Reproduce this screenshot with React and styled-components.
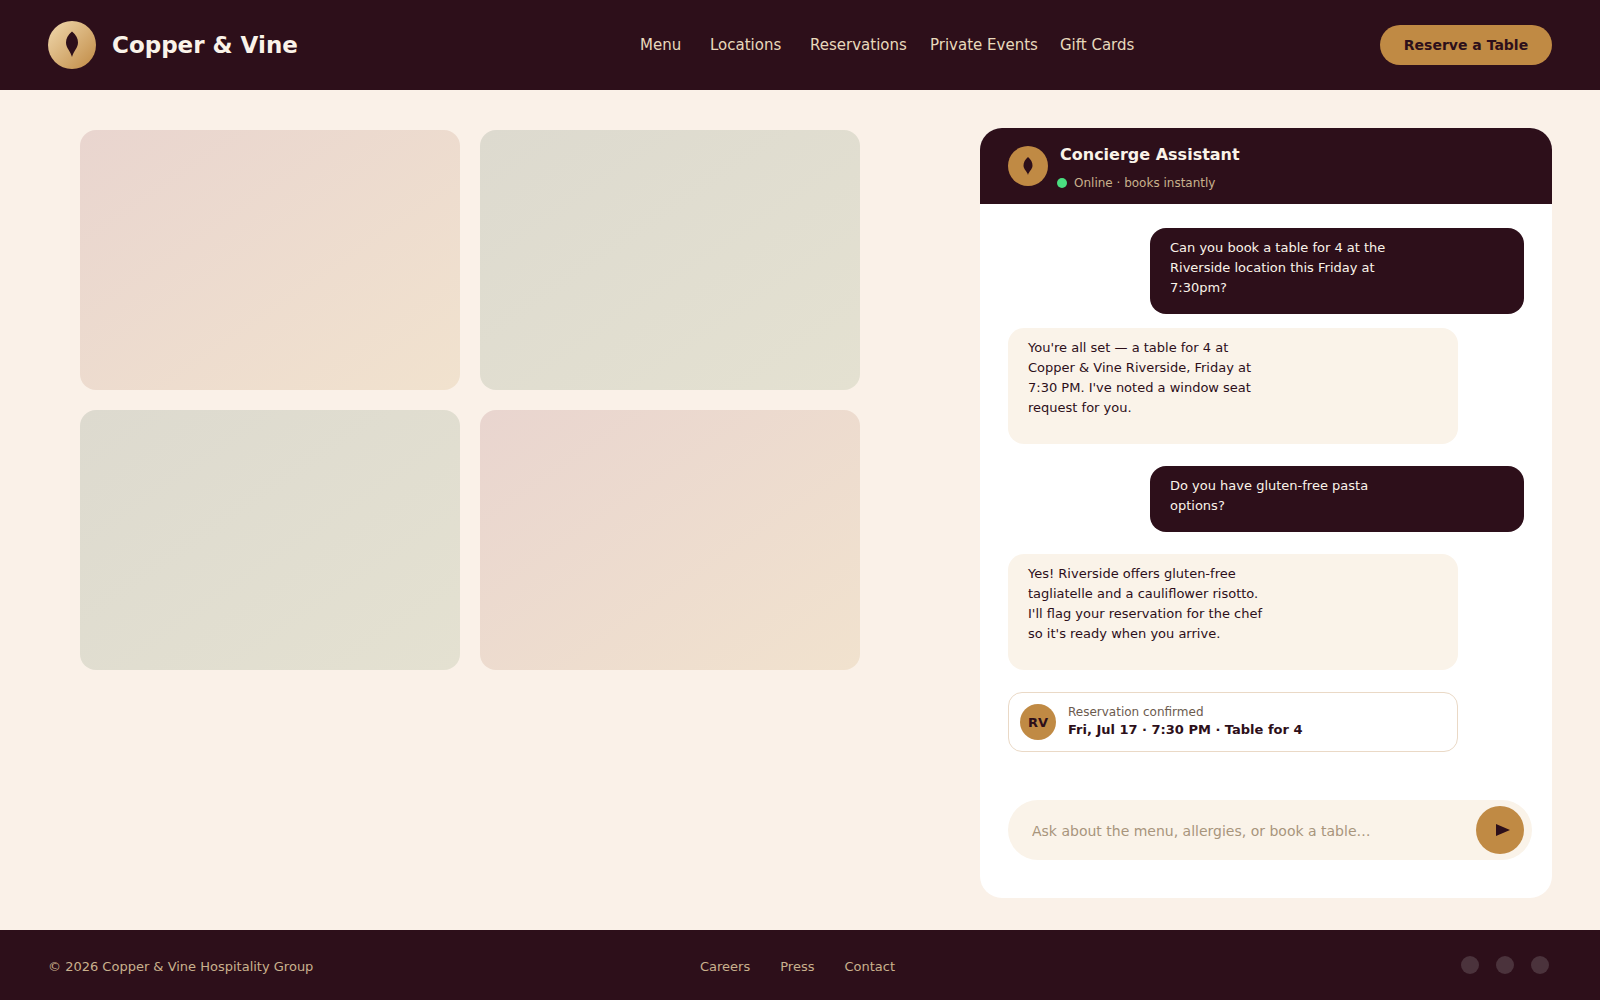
import React from "react";
import styled, { createGlobalStyle, css } from "styled-components";

const color = {
  plum: "#2d0f1a",
  copper: "#c08a44",
  cream: "#faf3e9",
  page: "#faf1e8",
  sand: "#e8d9bc",
  muted: "#c9b18d",
};

const GlobalStyle = createGlobalStyle`
  *, *::before, *::after { box-sizing: border-box; }
  body {
    margin: 0;
    font-family: "DejaVu Sans", Verdana, sans-serif;
    color: ${color.plum};
  }
  button, input { font-family: inherit; }
  h1, h2, p { margin: 0; }
  a { text-decoration: none; }
`;

const Page = styled.div`
  display: flex;
  flex-direction: column;
  min-height: 100vh;
  background: ${color.page};
`;

const Header = styled.header`
  display: grid;
  grid-template-columns: 37fr 57fr;
  align-items: center;
  height: 90px;
  padding: 0 48px;
  background: ${color.plum};
`;

const Brand = styled.a`
  display: flex;
  align-items: center;
  gap: 16px;
  color: ${color.cream};
  font-size: 23px;
  font-weight: 700;
`;

const HeaderActions = styled.div`
  display: flex;
  align-items: center;
  justify-content: space-between;
`;

const MainNav = styled.nav`
  display: grid;
  grid-template-columns: 70px 100px 120px 130px auto;
`;

const NavLink = styled.a`
  color: ${color.sand};
  font-size: 15px;
  line-height: 20px;
  white-space: nowrap;
`;

const ReserveButton = styled.button`
  height: 40px;
  width: 172px;
  padding: 0;
  border: 0;
  border-radius: 20px;
  background: ${color.copper};
  color: ${color.plum};
  font-size: 14px;
  font-weight: 700;
`;

const Main = styled.main`
  flex: 1;
  display: grid;
  grid-template-columns: 15fr 11fr;
  column-gap: 120px;
  padding: 38px 48px 32px 80px;
`;

const Gallery = styled.section`
  display: grid;
  grid-template-columns: 1fr 1fr;
  grid-auto-rows: 260px;
  align-content: start;
  gap: 20px;
  padding-top: 2px;
`;

const Tile = styled.div`
  border-radius: 16px;
  background: ${(p) =>
    p.$tone === "rose"
      ? "linear-gradient(to bottom right, #e9d5cf, #f1e2ce)"
      : "linear-gradient(to bottom right, #dddacf, #e4e1d1)"};
`;

const Chat = styled.section`
  display: flex;
  flex-direction: column;
  overflow: hidden;
  border-radius: 22px;
  background: #fff;
`;

const ChatHeader = styled.header`
  display: flex;
  align-items: center;
  gap: 9px;
  height: 76px;
  padding: 0 28px;
  background: ${color.plum};
`;

const ChatHeading = styled.div`
  padding-top: 6px;
`;

const ChatTitle = styled.h2`
  padding-left: 3px;
  color: ${color.cream};
  font-size: 16px;
  line-height: 20px;
`;

const Status = styled.p`
  display: flex;
  align-items: center;
  gap: 7px;
  margin-top: 8px;
  color: ${color.muted};
  font-size: 12px;
  line-height: 20px;

  &::before {
    content: "";
    width: 10px;
    height: 10px;
    border-radius: 50%;
    background: #4ade80;
  }
`;

const Messages = styled.div`
  display: flex;
  flex-direction: column;
  gap: 22px;
  padding: 24px 28px;
`;

const Exchange = styled.div`
  display: flex;
  flex-direction: column;
  gap: ${(p) => p.$gap}px;
`;

const Bubble = styled.div`
  border-radius: 16px;
  font-size: 13px;
  line-height: 20px;

  ${(p) =>
    p.$from === "guest"
      ? css`
          align-self: flex-end;
          width: 374px;
          padding: 10px 20px 16px;
          background: ${color.plum};
          color: ${color.cream};
        `
      : css`
          width: 450px;
          padding: 10px 20px 26px;
          background: ${color.cream};
          color: ${color.plum};
        `}
`;

const BubbleText = styled.p`
  max-width: 240px;
`;

const Confirmation = styled.div`
  display: flex;
  align-items: center;
  gap: 12px;
  width: 450px;
  height: 60px;
  padding: 0 11px;
  border: 1px solid #ead9c6;
  border-radius: 14px;
`;

const Initials = styled.span`
  display: grid;
  place-items: center;
  width: 36px;
  height: 36px;
  border-radius: 50%;
  background: ${color.copper};
  font-size: 13px;
  font-weight: 700;
`;

const ConfirmText = styled.div`
  padding-bottom: 2px;
`;

const ConfirmLabel = styled.p`
  color: #6b5a4e;
  font-size: 12px;
  line-height: 18px;
`;

const ConfirmDetail = styled.p`
  font-size: 13px;
  font-weight: 700;
  line-height: 18px;
`;

const Composer = styled.form`
  display: flex;
  align-items: center;
  height: 60px;
  margin: auto 20px 38px 28px;
  padding: 0 8px 0 24px;
  border-radius: 30px;
  background: ${color.cream};
`;

const ComposerInput = styled.input`
  flex: 1;
  min-width: 0;
  height: 40px;
  padding: 2px 0 0;
  border: 0;
  outline: 0;
  background: transparent;
  color: ${color.plum};
  font-size: 14px;

  &::placeholder {
    color: #a8957c;
    opacity: 1;
  }
`;

const SendButton = styled.button`
  width: 48px;
  height: 48px;
  padding: 0;
  border: 0;
  border-radius: 50%;
  background: ${color.copper};

  svg { display: block; }
`;

const Footer = styled.footer`
  display: grid;
  grid-template-columns: 163fr 213fr;
  align-items: center;
  height: 70px;
  padding: 0 48px;
  background: ${color.plum};
  color: ${color.muted};
  font-size: 13px;
  line-height: 20px;
`;

const Copyright = styled.p`
  padding-top: 4px;
`;

const FooterEnd = styled.div`
  display: flex;
  align-items: center;
  justify-content: space-between;
  padding-right: 3px;
`;

const FooterNav = styled.nav`
  display: flex;
  gap: 30px;
  padding-top: 4px;
`;

const FooterLink = styled.a`
  color: ${color.muted};
`;

const Socials = styled.div`
  display: flex;
  gap: 17px;
`;

const SocialLink = styled.a`
  width: 18px;
  height: 18px;
  border-radius: 50%;
  background: #4b333c;
`;

function BrandMark() {
  return (
    <svg width="48" height="48" viewBox="0 0 48 48" aria-hidden="true">
      <defs>
        <linearGradient id="brand-copper" x1="0" y1="0" x2="1" y2="1">
          <stop offset="0" stopColor="#f0d9ae" />
          <stop offset="1" stopColor={color.copper} />
        </linearGradient>
      </defs>
      <circle cx="24" cy="24" r="24" fill="url(#brand-copper)" />
      <path
        d="M24 10.500C28 13.500 30 17.500 30 21.500C30 27 25.500 30 24 36C22.500 30 18 27 18 21.500C18 17.500 20 13.500 24 10.500Z"
        fill={color.plum}
      />
    </svg>
  );
}

function AssistantMark() {
  return (
    <svg width="40" height="40" viewBox="0 0 40 40" aria-hidden="true">
      <circle cx="20" cy="20" r="20" fill={color.copper} />
      <path
        d="M20 11C23 13.500 24.500 16.500 24.500 19.500C24.500 23.500 21 25 20 29C19 25 15.500 23.500 15.500 19.500C15.500 16.500 17 13.500 20 11Z"
        fill={color.plum}
      />
    </svg>
  );
}

const navItems = ["Menu", "Locations", "Reservations", "Private Events", "Gift Cards"];
const footerItems = ["Careers", "Press", "Contact"];
const socialItems = ["Instagram", "Facebook", "Pinterest"];
const tiles = ["rose", "sage", "sage", "rose"];

export default function App() {
  return (
    <>
      <GlobalStyle />
      <Page>
        <Header>
          <Brand href="#">
            <BrandMark />
            Copper &amp; Vine
          </Brand>
          <HeaderActions>
            <MainNav>
              {navItems.map((item) => (
                <NavLink href="#" key={item}>{item}</NavLink>
              ))}
            </MainNav>
            <ReserveButton type="button">Reserve a Table</ReserveButton>
          </HeaderActions>
        </Header>

        <Main>
          <Gallery>
            {tiles.map((tone, i) => (
              <Tile $tone={tone} key={i} />
            ))}
          </Gallery>

          <Chat>
            <ChatHeader>
              <AssistantMark />
              <ChatHeading>
                <ChatTitle>Concierge Assistant</ChatTitle>
                <Status>Online · books instantly</Status>
              </ChatHeading>
            </ChatHeader>

            <Messages>
              <Exchange $gap={14}>
                <Bubble $from="guest">
                  <BubbleText>
                    Can you book a table for 4 at the Riverside location this Friday at 7:30pm?
                  </BubbleText>
                </Bubble>
                <Bubble $from="assistant">
                  <BubbleText>
                    You're all set — a table for 4 at Copper &amp; Vine Riverside, Friday at 7:30 PM.
                    I've noted a window seat request for you.
                  </BubbleText>
                </Bubble>
              </Exchange>
              <Exchange $gap={22}>
                <Bubble $from="guest">
                  <BubbleText>Do you have gluten-free pasta options?</BubbleText>
                </Bubble>
                <Bubble $from="assistant">
                  <BubbleText>
                    Yes! Riverside offers gluten-free tagliatelle and a cauliflower risotto. I'll flag
                    your reservation for the chef so it's ready when you arrive.
                  </BubbleText>
                </Bubble>
              </Exchange>
              <Confirmation>
                <Initials>RV</Initials>
                <ConfirmText>
                  <ConfirmLabel>Reservation confirmed</ConfirmLabel>
                  <ConfirmDetail>Fri, Jul 17 · 7:30 PM · Table for 4</ConfirmDetail>
                </ConfirmText>
              </Confirmation>
            </Messages>

            <Composer onSubmit={(e) => e.preventDefault()}>
              <ComposerInput
                type="text"
                aria-label="Message the concierge"
                placeholder="Ask about the menu, allergies, or book a table…"
              />
              <SendButton type="submit" aria-label="Send">
                <svg width="48" height="48" viewBox="0 0 48 48" aria-hidden="true">
                  <path d="M20 18L34 24L20 30Z" fill={color.plum} />
                </svg>
              </SendButton>
            </Composer>
          </Chat>
        </Main>

        <Footer>
          <Copyright>© 2026 Copper &amp; Vine Hospitality Group</Copyright>
          <FooterEnd>
            <FooterNav>
              {footerItems.map((item) => (
                <FooterLink href="#" key={item}>{item}</FooterLink>
              ))}
            </FooterNav>
            <Socials>
              {socialItems.map((item) => (
                <SocialLink href="#" aria-label={item} key={item} />
              ))}
            </Socials>
          </FooterEnd>
        </Footer>
      </Page>
    </>
  );
}
